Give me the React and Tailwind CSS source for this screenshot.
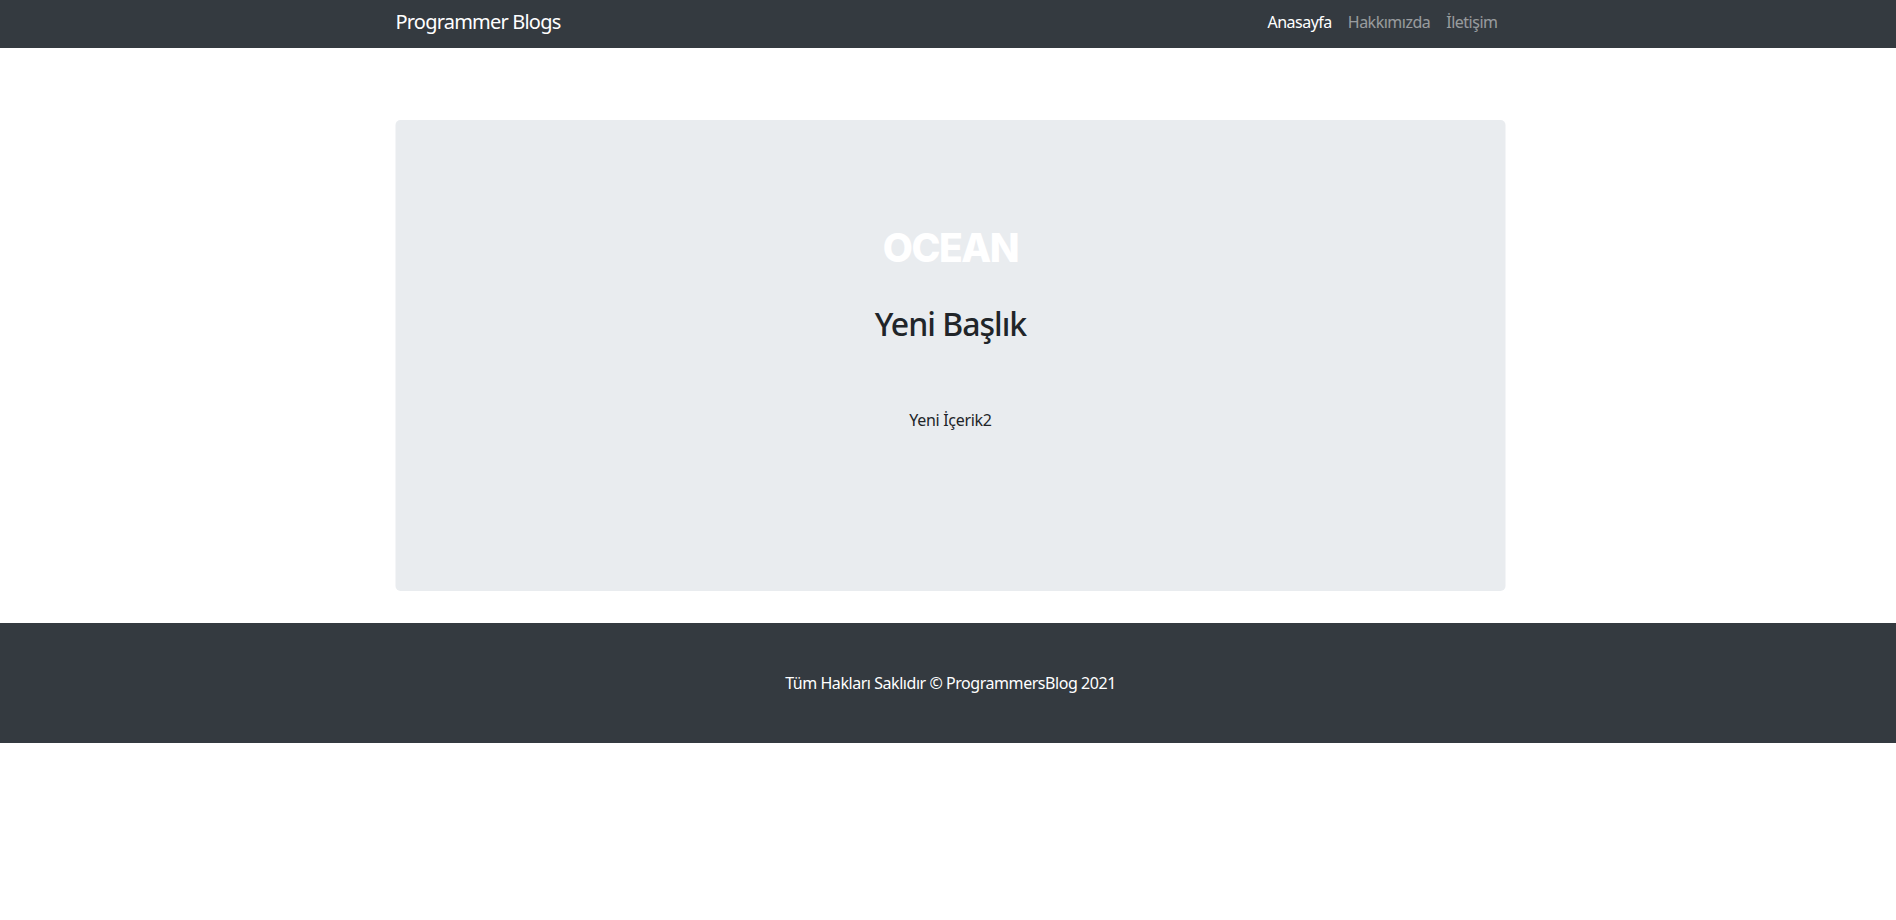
import React from "react";

const links = [
    { name: "Anasayfa", active: true },
    { name: "Hakkımızda", active: false },
    { name: "İletişim", active: false },
];

export default function App() {
    return (
        <div className="min-h-screen bg-white text-[#212529]" style={{ fontFamily: '"Noto Sans", "Open Sans", sans-serif' }}>
            <nav className="bg-[#343a40] h-12">
                <div className="w-[1110px] mx-auto translate-x-[2.5px] h-full flex items-center justify-between pb-[5px]">
                    <a className="text-white text-[20px] leading-none tracking-[-0.8px]">Programmer Blogs</a>
                    <ul className="flex items-center">
                        {links.map((link, index) =>
                            <li key={index}>
                                <a className={"px-2 text-[16px] tracking-[-0.5px] " + (link.active ? "text-white" : "text-white/50")}>{link.name}</a>
                            </li>
                        )}
                    </ul>
                </div>
            </nav>

            <main className="w-[1110px] mx-auto translate-x-[2.5px] pt-[72px] pb-8">
                <div className="bg-[#e9ecef] rounded-[5px] h-[471px] flex flex-col items-center pt-[108px]">
                    <div className="text-white text-[39px] leading-none font-extrabold tracking-[-1.5px]" style={{ fontFamily: 'Inter, "Noto Sans", sans-serif' }}>OCEAN</div>
                    <h2 className="mt-[38px] text-[32px] leading-[1.2] font-medium tracking-[-1px]">Yeni Başlık</h2>
                    <p className="mt-[65px] text-[16px] leading-[1.5] tracking-[-0.3px]">Yeni İçerik2</p>
                </div>
            </main>

            <footer className="bg-[#343a40] h-[120px] flex items-center justify-center">
                <p className="text-white text-[16px] tracking-[-0.45px] translate-x-[2.5px]">Tüm Hakları Saklıdır © ProgrammersBlog 2021</p>
            </footer>
        </div>
    );
}
